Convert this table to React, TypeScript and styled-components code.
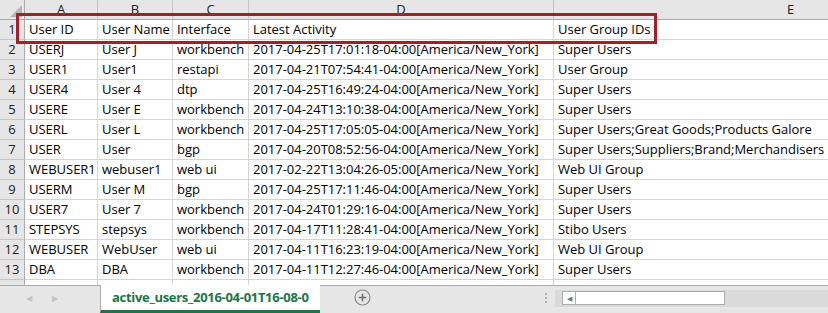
import React from 'react';
import styled, { createGlobalStyle } from 'styled-components';

const GlobalStyle = createGlobalStyle`
  html, body {
    margin: 0;
    padding: 0;
    background: #ffffff;
    overflow: hidden;
  }
  body {
    font-family: 'Open Sans', 'Liberation Sans', sans-serif;
  }
  * {
    box-sizing: border-box;
  }
`;

const COLS = [73, 75, 76, 305, 474];
const LETTERS = ['A', 'B', 'C', 'D', 'E'];

const ROWS: string[][] = [
  ['User ID', 'User Name', 'Interface', 'Latest Activity', 'User Group IDs'],
  ['USERJ', 'User J', 'workbench', '2017-04-25T17:01:18-04:00[America/New_York]', 'Super Users'],
  ['USER1', 'User1', 'restapi', '2017-04-21T07:54:41-04:00[America/New_York]', 'User Group'],
  ['USER4', 'User 4', 'dtp', '2017-04-25T16:49:24-04:00[America/New_York]', 'Super Users'],
  ['USERE', 'User E', 'workbench', '2017-04-24T13:10:38-04:00[America/New_York]', 'Super Users'],
  ['USERL', 'User L', 'workbench', '2017-04-25T17:05:05-04:00[America/New_York]', 'Super Users;Great Goods;Products Galore'],
  ['USER', 'User', 'bgp', '2017-04-20T08:52:56-04:00[America/New_York]', 'Super Users;Suppliers;Brand;Merchandisers'],
  ['WEBUSER1', 'webuser1', 'web ui', '2017-02-22T13:04:26-05:00[America/New_York]', 'Web UI Group'],
  ['USERM', 'User M', 'bgp', '2017-04-25T17:11:46-04:00[America/New_York]', 'Super Users'],
  ['USER7', 'User 7', 'workbench', '2017-04-24T01:29:16-04:00[America/New_York]', 'Super Users'],
  ['STEPSYS', 'stepsys', 'workbench', '2017-04-17T11:28:41-04:00[America/New_York]', 'Stibo Users'],
  ['WEBUSER', 'WebUser', 'web ui', '2017-04-11T16:23:19-04:00[America/New_York]', 'Web UI Group'],
  ['DBA', 'DBA', 'workbench', '2017-04-11T12:27:46-04:00[America/New_York]', 'Super Users'],
];

// the sheet is cut off by the tab bar, only a sliver of row 14 shows
const PARTIAL_ROW = ['', '', '', '', ''];

const Window = styled.div`
  width: 828px;
  height: 313px;
  display: flex;
  flex-direction: column;
  overflow: hidden;
  position: relative;
`;

const SheetArea = styled.div`
  height: 285px;
  overflow: hidden;
  flex: none;
`;

const Grid = styled.div`
  display: grid;
  grid-template-columns: 25px ${COLS.map((c) => `${c}px`).join(' ')};
  grid-auto-rows: 20px;
  width: max-content;
`;

const Corner = styled.div`
  background: #e6e6e6;
  border-right: 1px solid #ababab;
  border-bottom: 1px solid #ababab;
  position: relative;
  &::after {
    content: '';
    position: absolute;
    right: 2px;
    bottom: 2px;
    width: 0;
    height: 0;
    border-left: 12px solid transparent;
    border-bottom: 12px solid #b5b5b5;
  }
`;

const ColHead = styled.div`
  background: #e6e6e6;
  border-right: 1px solid #c6c6c6;
  border-bottom: 1px solid #ababab;
  font-size: 13px;
  line-height: 19px;
  color: #222;
  text-align: center;
`;

const RowHead = styled.div`
  background: #e6e6e6;
  border-right: 1px solid #ababab;
  border-bottom: 1px solid #c6c6c6;
  font-size: 13px;
  line-height: 19px;
  color: #222;
  text-align: center;
`;

const Cell = styled.div<{ $overflow?: boolean }>`
  border-right: 1px solid #d4d4d4;
  border-bottom: 1px solid #d4d4d4;
  font-size: 13px;
  line-height: 19px;
  color: #000;
  padding-left: 4px;
  white-space: nowrap;
  overflow: ${(p) => (p.$overflow ? 'visible' : 'hidden')};
  letter-spacing: -0.02px;
`;

const Highlight = styled.div`
  position: absolute;
  left: 16px;
  top: 13px;
  width: 641px;
  height: 31px;
  border: 3px solid #a31f2a;
  pointer-events: none;
`;

const TabBar = styled.div`
  flex: 1;
  background: #e6e6e6;
  border-top: 1px solid #ababab;
  display: flex;
  align-items: stretch;
`;

const NavArrows = styled.div`
  width: 100px;
  flex: none;
  display: flex;
  align-items: center;
  padding-left: 26px;
  padding-bottom: 3px;
  gap: 20px;
  color: #c4c4c4;
  font-size: 8px;
  line-height: 12px;
`;

const SheetTab = styled.div`
  width: 220px;
  flex: none;
  margin-top: -1px;
  background: #ffffff;
  border-left: 1px solid #ababab;
  border-bottom: 3px solid #217346;
  color: #217346;
  font-weight: 700;
  font-size: 13px;
  line-height: 24px;
  padding-left: 11px;
  white-space: nowrap;
  overflow: hidden;
  letter-spacing: -0.3px;
  height: 28px;
`;

const AddSheet = styled.div`
  width: 84px;
  flex: none;
  display: flex;
  align-items: center;
  justify-content: center;
  padding-bottom: 4px;
`;

const Splitter = styled.div`
  width: 151px;
  flex: none;
  display: flex;
  align-items: center;
  justify-content: flex-end;
  padding-bottom: 4px;
  padding-right: 8px;
`;

const Dots = styled.div`
  display: flex;
  flex-direction: column;
  gap: 2px;
  & > span {
    width: 2px;
    height: 2px;
    background: #b0b0b0;
  }
`;

const ScrollTrack = styled.div`
  flex: 1;
  display: flex;
  align-items: center;
  padding-bottom: 3px;
`;

const ScrollBar = styled.div`
  flex: 1;
  height: 17px;
  background: #dadada;
  display: flex;
  align-items: center;
  padding-left: 7px;
`;

const ScrollBtn = styled.div`
  width: 14px;
  height: 14px;
  background: #ffffff;
  border: 1px solid #ababab;
  display: flex;
  align-items: center;
  justify-content: center;
  color: #777;
  font-size: 7px;
`;

const Thumb = styled.div`
  width: 149px;
  height: 14px;
  background: #ffffff;
  border: 1px solid #ababab;
  border-left: none;
`;

function App() {
  return (
    <Window>
      <GlobalStyle />
      <SheetArea>
        <Grid>
          <Corner />
          {LETTERS.map((l) => (
            <ColHead key={l}>{l}</ColHead>
          ))}
          {ROWS.map((row, i) => (
            <React.Fragment key={i}>
              <RowHead>{i + 1}</RowHead>
              {row.map((v, j) => (
                <Cell key={j} $overflow={j === 4}>
                  {v}
                </Cell>
              ))}
            </React.Fragment>
          ))}
          <RowHead />
          {PARTIAL_ROW.map((v, j) => (
            <Cell key={`p${j}`}>{v}</Cell>
          ))}
        </Grid>
      </SheetArea>
      <TabBar>
        <NavArrows>
          <span>◀</span>
          <span>▶</span>
        </NavArrows>
        <SheetTab>active_users_2016-04-01T16-08-0</SheetTab>
        <AddSheet>
          <svg width="17" height="17" viewBox="0 0 17 17">
            <circle cx="8.5" cy="8.5" r="7.5" fill="none" stroke="#8a8a8a" strokeWidth="1.2" />
            <path d="M8.5 4.8v7.4M4.8 8.5h7.4" stroke="#6f6f6f" strokeWidth="1.6" />
          </svg>
        </AddSheet>
        <Splitter>
          <Dots>
            <span />
            <span />
            <span />
          </Dots>
        </Splitter>
        <ScrollTrack>
          <ScrollBar>
            <ScrollBtn>◀</ScrollBtn>
            <Thumb />
          </ScrollBar>
        </ScrollTrack>
      </TabBar>
      <Highlight />
    </Window>
  );
}

export default App;
